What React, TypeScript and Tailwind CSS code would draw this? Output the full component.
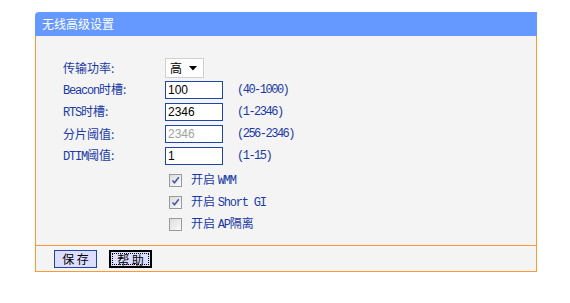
import React from 'react';

const cjk = '"Noto Sans CJK SC", sans-serif';

const Lat: React.FC<{ children: React.ReactNode }> = ({ children }) => (
  <span className="font-mono text-[12px] tracking-[-1.2px]">{children}</span>
);

const Row: React.FC<{ label: React.ReactNode; children: React.ReactNode; hint?: string }> = ({ label, children, hint }) => (
  <div className="flex h-[22px] items-center">
    <div className="w-[102px] text-[12px] text-[#1a3aa6]">{label}</div>
    <div className="w-[72px]">{children}</div>
    {hint && <span className="font-mono text-[12px] tracking-[-1.5px] text-[#1a3aa6]">{hint}</span>}
  </div>
);

const Field: React.FC<{ value: string; disabled?: boolean }> = ({ value, disabled }) => (
  <div
    className={`h-[18px] w-[58px] border border-[#1f44ac] bg-white pl-[2px] font-['Liberation_Sans',sans-serif] text-[12px] leading-[16px] ${
      disabled ? 'text-[#a0a0a0]' : 'text-black'
    }`}
  >
    {value}
  </div>
);

const Check: React.FC<{ checked: boolean; label: React.ReactNode }> = ({ checked, label }) => (
  <div className="flex h-[22px] items-center pl-[4px]">
    <span className="flex h-[13px] w-[13px] items-center justify-center border border-[#9a9a9a] bg-gradient-to-br from-[#dcdcdc] to-[#fbfbfb]">
      {checked && (
        <svg width="9" height="9" viewBox="0 0 9 9">
          <path d="M1.5 4.5 L3.5 6.8 L7.8 1.2" stroke="#4a5aa8" strokeWidth="1.6" fill="none" />
        </svg>
      )}
    </span>
    <span className="ml-[9px] text-[12px] text-[#1a3aa6]">{label}</span>
  </div>
);

export default function App() {
  return (
    <div className="h-[303px] w-[570px] bg-white pt-[12px] pl-[35px]" style={{ fontFamily: cjk }}>
      <div className="w-[502px]">
        <div className="h-[24px] rounded-tl-[4px] bg-[#6699ff] pl-[7px] text-[12px] leading-[24px] text-white">
          无线高级设置
        </div>
        <div className="h-[209px] border-x border-[#ff9933] bg-[#f4f4f4] pt-[21px] pl-[27px]">
          <Row label="传输功率:">
            <div className="flex h-[20px] w-[39px] items-center border border-[#d0d0d0] bg-white pl-[4px] text-[12px] text-black">
              <span>高</span>
              <svg className="ml-[7px]" width="8" height="5" viewBox="0 0 8 5">
                <path d="M0 0 H8 L4 4.5 Z" fill="#000" />
              </svg>
            </div>
          </Row>
          <Row label={<><Lat>Beacon</Lat>时槽:</>} hint="(40-1000)">
            <Field value="100" />
          </Row>
          <Row label={<><Lat>RTS</Lat>时槽:</>} hint="(1-2346)">
            <Field value="2346" />
          </Row>
          <Row label="分片阈值:" hint="(256-2346)">
            <Field value="2346" disabled />
          </Row>
          <Row label={<><Lat>DTIM</Lat>阈值:</>} hint="(1-15)">
            <Field value="1" />
          </Row>
          <div className="ml-[102px] mt-[2px]">
            <Check checked label={<>开启 <Lat>WMM</Lat></>} />
            <Check checked label={<>开启 <Lat>Short GI</Lat></>} />
            <Check checked={false} label={<>开启 <Lat>AP</Lat>隔离</>} />
          </div>
        </div>
        <div className="flex h-[27px] gap-[12px] border border-[#ff9933] bg-[#f4f4f4] pt-[4px] pl-[18px]">
          <button className="h-[18px] w-[43px] border border-[#1f44ac] bg-[#ddddff] text-[12px] leading-[16px] text-black">
            保&nbsp;存
          </button>
          <button className="h-[18px] w-[43px] border-2 border-black bg-[#ddddff] p-[1px] text-[12px] leading-[12px] text-black">
            <span className="block h-full w-full border border-dotted border-black">帮&nbsp;助</span>
          </button>
        </div>
      </div>
    </div>
  );
}
